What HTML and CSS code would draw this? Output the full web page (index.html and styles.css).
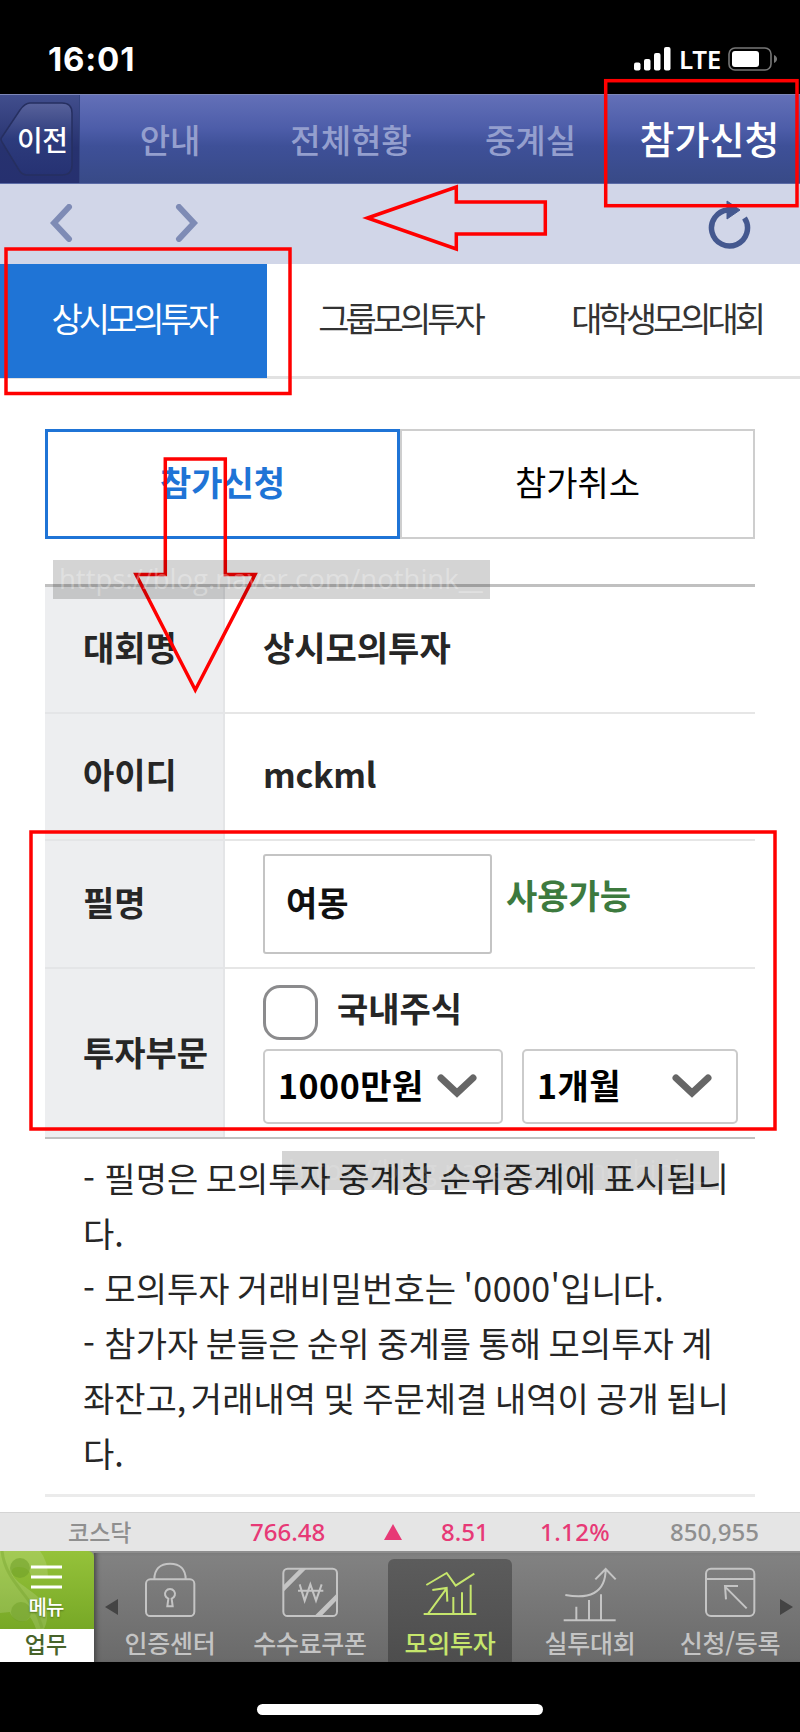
FILE: index.html
```html
<!DOCTYPE html>
<html lang="ko">
<head>
  <meta charset="UTF-8" />
  <meta name="viewport" content="width=device-width, initial-scale=1.0"/>
  <title>참가신청</title>
  <link rel="stylesheet" href="styles.css">
</head>
<body>
<div class="screen">
  <div class="status-bar">
    <span class="time">16:01</span>
    <div class="status-icons">
      <svg width="37" height="24" viewBox="0 0 37 24" fill="#fff">
        <rect x="0" y="15.500" width="6.500" height="8" rx="2"/>
        <rect x="10" y="12" width="6.500" height="11.500" rx="2"/>
        <rect x="20" y="6" width="6.500" height="17.500" rx="2"/>
        <rect x="30" y="0" width="6.500" height="23.500" rx="2"/>
      </svg>
      <span class="lte">LTE</span>
      <svg width="49" height="24" viewBox="0 0 49 24">
        <rect x="1" y="1" width="42" height="22" rx="6" fill="none" stroke="#777" stroke-width="1.600"/>
        <rect x="4" y="4" width="27" height="16" rx="3" fill="#fff"/>
        <path d="M46 8c4 1.500 4 6.500 0 8z" fill="#777"/>
      </svg>
    </div>
  </div>

  <nav class="top-nav">
    <a class="prev">
      <svg width="80" height="90" viewBox="0 0 80 90">
        <defs>
          <linearGradient id="prevBg" x1="0" y1="0" x2="0" y2="1">
            <stop offset="0" stop-color="#58629b"/>
            <stop offset="0.500" stop-color="#2d3b7c"/>
            <stop offset="1" stop-color="#263273"/>
          </linearGradient>
        </defs>
        <path d="M2 43L20 16Q25 9 30 9H62Q72 9 72 19V71Q72 81 62 81H27Q22 81 19 76L2 48Q0 45 2 43Z" fill="url(#prevBg)" stroke="#262f60" stroke-width="1.500"/>
      </svg>
      <span>이전</span>
    </a>
    <a class="nav-item">안내</a>
    <a class="nav-item wide">전체현황</a>
    <a class="nav-item third">중계실</a>
    <a class="nav-item active">참가신청</a>
  </nav>

  <div class="toolbar">
    <svg class="back" width="24" height="38" viewBox="0 0 24 38"><path d="M19 3L4 19L19 35"/></svg>
    <svg class="forward" width="24" height="38" viewBox="0 0 24 38"><path d="M5 3L20 19L5 35"/></svg>
    <svg class="reload" width="44" height="50" viewBox="0 0 44 50">
      <path d="M37.500 18A18 18 0 1 1 21 10" fill="none" stroke="#44588f" stroke-width="5.500"/>
      <path d="M20 1L33 10L20 19Z" fill="#44588f" stroke="#44588f" stroke-linejoin="round"/>
    </svg>
  </div>

  <div class="tabs">
    <a class="tab active">상시모의투자</a>
    <a class="tab">그룹모의투자</a>
    <a class="tab">대학생모의대회</a>
  </div>

  <main class="content">
    <div class="segment">
      <button class="seg-btn active">참가신청</button>
      <button class="seg-btn">참가취소</button>
    </div>

    <table class="form-table">
      <tr>
        <th>대회명</th>
        <td>상시모의투자</td>
      </tr>
      <tr>
        <th>아이디</th>
        <td class="user-id">mckml</td>
      </tr>
      <tr class="row-name">
        <th>필명</th>
        <td>
          <div class="name-field">
            <input type="text" value="여몽" />
            <span class="available">사용가능</span>
          </div>
        </td>
      </tr>
      <tr class="row-part">
        <th>투자부문</th>
        <td>
          <label class="check"><input type="checkbox" /><span>국내주식</span></label>
          <div class="selects">
            <div class="select amount"><span>1000만원</span>
              <svg width="40" height="26" viewBox="0 0 40 26"><path d="M4 5L20 20L36 5"/></svg>
            </div>
            <div class="select period"><span>1개월</span>
              <svg width="40" height="26" viewBox="0 0 40 26"><path d="M4 5L20 20L36 5"/></svg>
            </div>
          </div>
        </td>
      </tr>
    </table>

    <div class="notes">
      <span class="dash">-</span> 필명은 모의투자 중계창 순위중계에 표시됩니<br>다.<br>
      <span class="dash">-</span> 모의투자 거래비밀번호는 <span class="digits">'0000'</span>입니다.<br>
      <span class="dash">-</span> 참가자 분들은 순위 중계를 통해 모의투자 계<br>좌잔고<span class="comma">,</span> 거래내역 및 주문체결 내역이 공개 됩니<br>다.
    </div>
  </main>

  <div class="ticker">
    <span class="market">코스닥</span>
    <span class="index">766.48</span>
    <span class="arrow-up"></span>
    <span class="change">8.51</span>
    <span class="rate">1.12%</span>
    <span class="volume">850,955</span>
  </div>

  <div class="bottom-bar">
    <div class="menu">
      <div class="menu-top">
        <svg class="menu-mark" width="94" height="78" viewBox="0 0 94 78">
          <path d="M0 0H40Q48 10 48 26H31C31 14 12 14 12 20C12 34 42 40 47 60Q48 70 44 78H36C34 72 32 69 30 66C26 74 12 70 10 61L0 62Z" fill="#fff" fill-opacity="0.140"/>
          <path d="M2 0C6 34 34 44 42 77" fill="none" stroke="#6f9f28" stroke-opacity="0.350" stroke-width="3"/>
          <circle cx="20" cy="17" r="10" fill="#6f9f28" fill-opacity="0.550"/>
          <circle cx="21" cy="61" r="10" fill="#6f9f28" fill-opacity="0.500"/>
        </svg>
        <svg class="burger" width="31" height="24" viewBox="0 0 31 24"><path d="M0 2H31M0 12H31M0 22H31" stroke="#fff" stroke-width="3"/></svg>
        <span>메뉴</span>
      </div>
      <div class="menu-bottom">업무</div>
    </div>

    <div class="dock">
      <span class="scroll-left"></span>
      <a class="dock-item">
        <svg viewBox="0 0 192 192">
          <rect x="24" y="64" width="145" height="110" rx="13"/>
          <path d="M49 64C49 34 66 17 96 17C126 17 143 34 143 64"/>
          <path d="M91 122A15 15 0 1 1 101 122L104 145H88Z"/>
        </svg>
        <span>인증센터</span>
      </a>
      <a class="dock-item">
        <svg viewBox="0 0 192 192">
          <rect x="16" y="32" width="161" height="142" rx="13"/>
          <path d="M18 91V100L85 32H66L18 80ZM110 173H131L176 127V107Z" fill="#c4c4c4" stroke="none"/>
          <path d="M65 79L80 128L97 79L114 128L131 79M60 98H136"/>
        </svg>
        <span>수수료쿠폰</span>
      </a>
      <a class="dock-item active">
        <svg viewBox="0 0 192 192">
          <path d="M25 81L86 45L113 83L169 47M31 166L86 91M43 96L86 90L88 131M17 168H175M106 168V117M132 168V103M158 168V80"/>
        </svg>
        <span>모의투자</span>
      </a>
      <a class="dock-item">
        <svg viewBox="0 0 192 192">
          <path d="M22 111C90 124 143 108 143 33M112 64L143 33L173 64M17 187H173M55 187V146M93 187V126M129 187V109"/>
        </svg>
        <span>실투대회</span>
      </a>
      <a class="dock-item">
        <svg viewBox="0 0 192 192">
          <rect x="24" y="32" width="145" height="142" rx="15"/>
          <path d="M24 63H169M146 151L81 86M120 84H81L84 124"/>
        </svg>
        <span>신청/등록</span>
      </a>
      <span class="scroll-right"></span>
    </div>
  </div>

  <div class="home-area"><div class="home-indicator"></div></div>

  <!-- red guide marks -->
  <svg class="marks" width="800" height="1732" viewBox="0 0 800 1732">
    <rect x="605.700" y="80.700" width="191.300" height="125"/>
    <rect x="6" y="249" width="284" height="144.500"/>
    <rect x="31" y="832" width="744" height="297"/>
    <path d="M367.500 218L456.300 187V202H545.300V234H456.300V249Z"/>
    <path d="M165.300 459H225.300V574.500H255L195.300 690L136 574.500H165.300Z"/>
  </svg>
  <div class="watermark first">https://blog.naver.com/nothink__</div>
  <div class="watermark second">https://blog.naver.com/nothink__</div>
</div>
</body>
</html>
```
FILE: styles.css
```css
* {
  box-sizing: border-box;
}
body {
  margin: 0;
  font-family: "Noto Sans CJK KR", sans-serif;
  background: #fff;
}
.screen {
  position: relative;
  width: 800px;
  height: 1732px;
  overflow: hidden;
  display: flex;
  flex-direction: column;
}

/* status bar */
.status-bar {
  height: 94px;
  background: #000;
  color: #fff;
  display: flex;
  justify-content: space-between;
  align-items: flex-start;
  padding: 46px 23px 0 48px;
}
.time {
  font: 700 33px/26px Inter, sans-serif;
  letter-spacing: 0.8px;
}
.status-icons {
  display: flex;
  align-items: center;
  height: 26px;
}
.lte {
  font: 600 26px/26px "Noto Sans", sans-serif;
  letter-spacing: -0.3px;
  margin: 0 7px 0 8px;
}

/* navigation */
.top-nav {
  height: 90px;
  display: flex;
  border-top: 1px solid #7d87b8;
  border-bottom: 1px solid #5b6ba6;
  background: linear-gradient(#6370b8, #4d5da9 38%, #3e5098 58%, #384a87);
}
.prev {
  position: relative;
  width: 80px;
  background: linear-gradient(#414e8d, #27326f 60%, #26306f);
  border-right: 1px solid #33437f;
}
.prev svg {
  display: block;
  margin-top: -1px;
}
.prev span {
  position: absolute;
  left: 17px;
  top: 25px;
  font-size: 28px;
  line-height: 38px;
  font-weight: 500;
  color: #fff;
  letter-spacing: -0.5px;
}
.nav-item {
  width: 180px;
  line-height: 88px;
  text-align: center;
  font-size: 33px;
  font-weight: 500;
  color: #949fce;
}
.nav-item.wide {
  width: 182px;
}
.nav-item.third {
  width: 177px;
}
.nav-item.active {
  width: 181px;
  font-size: 38px;
  line-height: 86px;
  color: #fff;
}
.toolbar {
  height: 80px;
  background: #d1d6e8;
  display: flex;
  align-items: flex-start;
  padding: 20px 49px 0 50px;
}
.back, .forward {
  fill: none;
  stroke: #7e8bb5;
  stroke-width: 6;
  stroke-linecap: round;
}
.forward {
  margin-left: 100px;
}
.reload {
  margin: -4px 0 0 auto;
}

/* tabs */
.tabs {
  display: flex;
  height: 115px;
  border-bottom: 3px solid #e2e2e2;
}
.tab {
  width: 267px;
  height: 114px;
  line-height: 107px;
  text-align: center;
  font-size: 34px;
  letter-spacing: -4px;
  color: #333;
}
.tab.active {
  background: #1f74d6;
  color: #fff;
}

/* content */
.content {
  height: 1133px;
  padding: 50px 45px 0;
}
.segment {
  display: flex;
}
.seg-btn {
  width: 355px;
  height: 110px;
  padding: 0 0 6px;
  border: 2px solid #cecece;
  background: #fff;
  font-family: inherit;
  font-size: 34px;
  color: #000;
}
.seg-btn.active {
  border: 3px solid #1f74d6;
  color: #1f74d6;
  font-weight: bold;
}
.form-table {
  width: 710px;
  margin-top: 45px;
  border-spacing: 0;
  border-top: 3px solid #c0c0c0;
  border-bottom: 2px solid #c0c0c0;
  font-size: 34px;
  font-weight: bold;
  color: #262626;
}
.form-table th {
  width: 180px;
  height: 127px;
  padding: 0 0 6px 38px;
  text-align: left;
  background: #edeef0;
  border-right: 2px solid #e4e5e7;
  border-bottom: 2px solid #e4e5e7;
}
.form-table td {
  padding: 0 0 6px 38px;
  border-bottom: 2px solid #e6e6e6;
}
.form-table .user-id {
  letter-spacing: -0.3px;
}
.form-table .row-name th {
  height: 128px;
}
.form-table .row-name td {
  padding: 0 0 0 38px;
}
.form-table .row-part th {
  height: 168px;
  padding-bottom: 4px;
  border-bottom: none;
}
.form-table .row-part td {
  padding: 0 0 0 38px;
  border-bottom: none;
  vertical-align: top;
}
.name-field {
  display: flex;
  align-items: center;
}
.name-field input {
  width: 229px;
  height: 100px;
  padding: 0 0 6px 21px;
  border: 2px solid #c4c4c4;
  border-radius: 3px;
  font: bold 34px "Noto Sans CJK KR", sans-serif;
  color: #111;
}
.available {
  margin: -20px 0 0 14px;
  color: #3d7a3e;
}
.check {
  display: flex;
  height: 55px;
  margin-top: 16px;
  line-height: 45px;
}
.check input {
  appearance: none;
  width: 55px;
  height: 55px;
  margin: 0 19px 0 0;
  border: 3px solid #8b8b8d;
  border-radius: 17px;
  background: #fff;
}
.selects {
  display: flex;
  gap: 19px;
  margin-top: 9px;
}
.select {
  display: flex;
  justify-content: space-between;
  align-items: center;
  height: 75px;
  padding: 0 24px 4px 13px;
  border: 2px solid #cbcbcb;
  border-radius: 5px;
  color: #000;
}
.select span {
  letter-spacing: 0.5px;
}
.select svg {
  margin-top: 2px;
  fill: none;
  stroke: #666;
  stroke-width: 7;
  stroke-linecap: round;
}
.amount {
  width: 240px;
}
.period {
  width: 216px;
}
.notes {
  height: 358px;
  padding: 11px 0 0 38px;
  border-bottom: 3px solid #ebebeb;
  font-size: 34px;
  line-height: 55px;
  color: #262626;
  white-space: nowrap;
  word-spacing: -2px;
}
.dash {
  letter-spacing: 2px;
}
.comma {
  letter-spacing: -3px;
}
.digits {
  letter-spacing: 0.4px;
}

/* ticker */
.ticker {
  height: 39px;
  display: flex;
  align-items: center;
  background: #e5e5e5;
  border-top: 1px solid #d4d4d4;
  padding-left: 68px;
  font: 500 24px/38px "Noto Sans", "Noto Sans CJK KR", sans-serif;
  color: #e73976;
}
.market {
  width: 182px;
  font-size: 23px;
  color: #8f8f8f;
}
.index {
  width: 134px;
}
.arrow-up {
  width: 18px;
  border-left: 9px solid transparent;
  border-right: 9px solid transparent;
  border-bottom: 16px solid #e73976;
}
.change {
  margin-left: 39px;
  width: 99px;
}
.rate {
  width: 130px;
  letter-spacing: 0.4px;
}
.volume {
  color: #8f8f8f;
}

/* bottom bar */
.bottom-bar {
  height: 111px;
  display: flex;
  background: linear-gradient(#828282, #6a6a6a);
  border-top: 2px solid #8e8e8e;
}
.menu {
  width: 94px;
  margin-top: -2px;
  text-align: center;
}
.menu-top {
  position: relative;
  height: 78px;
  padding-top: 14px;
  background: linear-gradient(#95c23a, #77a826);
  border-radius: 0 6px 0 0;
  color: #fff;
  font-size: 20px;
  font-weight: 500;
  line-height: 34px;
  text-shadow: 0 1px 2px #4f731a;
}
.menu-top span {
  display: block;
  position: relative;
  margin-top: 1px;
  margin-left: -2px;
  letter-spacing: -1px;
}
.menu-mark {
  position: absolute;
  left: 0;
  top: 0;
}
.burger {
  position: relative;
  display: block;
  margin: 0 auto 0 31px;
}
.menu-bottom {
  height: 33px;
  padding-right: 2px;
  background: #fff;
  color: #48632a;
  font-size: 23px;
  font-weight: 500;
  line-height: 28px;
}
.dock {
  position: relative;
  flex: 1;
  padding-left: 6px;
  display: flex;
  box-shadow: inset 5px 0 5px -3px #444;
}
.dock-item {
  width: 124px;
  margin: 6px 8px 0;
  display: flex;
  flex-direction: column;
  align-items: center;
  color: #c4c4c4;
  font-size: 25px;
  font-weight: 500;
  line-height: 34px;
  white-space: nowrap;
}
.dock-item svg {
  width: 64px;
  height: 64px;
  margin-top: -1px;
  flex: none;
  fill: none;
  stroke: #c4c4c4;
  stroke-width: 6;
}
.dock-item span {
  margin-top: 3px;
  letter-spacing: -0.3px;
}
.dock-item.active {
  background: linear-gradient(#5c5c5c, #4d4d4d);
  border-radius: 6px 6px 0 0;
  color: #c6e66c;
}
.dock-item.active svg {
  stroke: #c6e66c;
}
.scroll-left, .scroll-right {
  position: absolute;
  top: 46px;
  border-top: 8px solid transparent;
  border-bottom: 8px solid transparent;
}
.scroll-left {
  left: 11px;
  border-right: 13px solid #444;
}
.scroll-right {
  right: 7px;
  border-left: 13px solid #444;
}
.home-area {
  flex: 1;
  background: #000;
  padding-top: 42px;
}
.home-indicator {
  width: 286px;
  height: 11px;
  margin: 0 auto;
  border-radius: 6px;
  background: #fff;
}

/* overlays */
.marks {
  position: absolute;
  left: 0;
  top: 0;
  fill: none;
  stroke: #f00;
  stroke-width: 3.5;
}
.watermark {
  position: absolute;
  width: 437px;
  height: 39px;
  padding-left: 6px;
  background: rgba(0, 0, 0, 0.17);
  color: rgba(255, 255, 255, 0.3);
  font: 27.5px/37px "Open Sans", sans-serif;
  white-space: nowrap;
}
.watermark.first {
  left: 53px;
  top: 560px;
}
.watermark.second {
  left: 282px;
  top: 1151px;
  color: rgba(255, 255, 255, 0.15);
}
```
